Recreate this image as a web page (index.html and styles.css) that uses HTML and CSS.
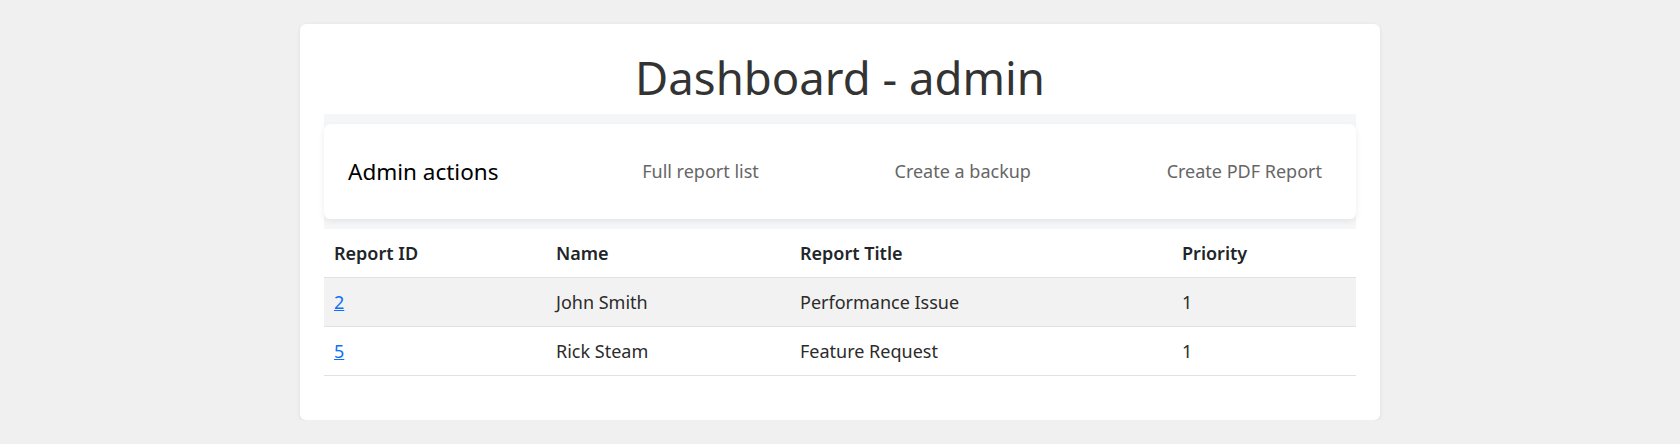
FILE: index.html
```html
<!DOCTYPE html>
<html lang="en">
<head>
<meta charset="utf-8">
<title>Dashboard - admin</title>
<link rel="stylesheet" href="styles.css">
</head>
<body>
<main class="card">
  <h1 class="page-title">Dashboard - admin</h1>
  <div class="nav-wrap">
    <nav class="navbar">
      <span class="brand">Admin actions</span>
      <a class="nav-link" href="#">Full report list</a>
      <a class="nav-link" href="#">Create a backup</a>
      <a class="nav-link" href="#">Create PDF Report</a>
    </nav>
  </div>
  <table class="reports">
    <thead>
      <tr>
        <th class="col-id">Report ID</th>
        <th class="col-name">Name</th>
        <th class="col-title">Report Title</th>
        <th class="col-prio">Priority</th>
      </tr>
    </thead>
    <tbody>
      <tr class="striped">
        <td><a class="id-link" href="#">2</a></td>
        <td>John Smith</td>
        <td>Performance Issue</td>
        <td>1</td>
      </tr>
      <tr>
        <td><a class="id-link" href="#">5</a></td>
        <td>Rick Steam</td>
        <td>Feature Request</td>
        <td>1</td>
      </tr>
    </tbody>
  </table>
</main>
</body>
</html>
```

FILE: styles.css
```css
* { box-sizing: border-box; }

html, body {
  margin: 0;
  padding: 0;
}

body {
  background: #f0f0f0;
  font-family: "Noto Sans", "Open Sans", sans-serif;
  color: #2b2b2b;
  font-size: 18px;
  line-height: 1.5;
  padding-top: 24px;
}

.card {
  width: 1080px;
  margin: 0 auto;
  background: #ffffff;
  border-radius: 6px;
  box-shadow: 0 1px 4px rgba(0, 0, 0, 0.08);
  padding: 24px 24px 44px;
}

.page-title {
  margin: 2px 0 9px;
  text-align: center;
  font-size: 45.5px;
  font-weight: 400;
  line-height: 55px;
  color: #333333;
}

.nav-wrap {
  background: #f5f6f7;
  padding: 10px 0;
}

.navbar {
  display: flex;
  align-items: center;
  justify-content: space-between;
  background: #ffffff;
  border-radius: 6px;
  box-shadow: 0 2px 6px rgba(0, 0, 0, 0.08);
  height: 95px;
  padding: 0 26px 0 24px;
}

.brand {
  font-size: 22.5px;
  color: #000000;
  margin-right: 16px;
}

.nav-link {
  color: #666666;
  text-decoration: none;
  padding: 8px;
  font-size: 18px;
}

.reports {
  width: 100%;
  border-collapse: collapse;
}

.reports th,
.reports td {
  text-align: left;
  padding: 11px 10px 10px;
  line-height: 27px;
  border-bottom: 1px solid #dee2e6;
}

.reports th {
  font-weight: 600;
  color: #212529;
}

.col-id { width: 222px; }
.col-name { width: 244px; }
.col-title { width: 382px; }
.col-prio { width: 184px; }

.striped td {
  background: #f2f2f2;
}

.id-link {
  color: #0d6efd;
  text-decoration: underline;
}
```
